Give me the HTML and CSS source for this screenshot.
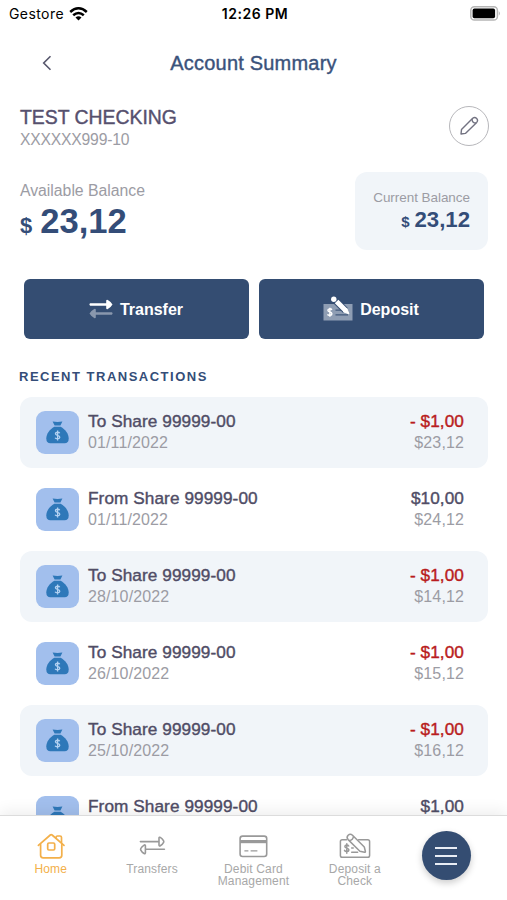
FILE: index.html
```html
<!DOCTYPE html>
<html lang="en">
<head>
<meta charset="utf-8">
<title>Account Summary</title>
<link rel="stylesheet" href="styles.css">
</head>
<body>
<svg class="defs" aria-hidden="true">
  <symbol id="bag" viewBox="0 0 23 23">
    <path d="M6.6 .6 Q11.5 1.4 16.4 .6 L14.4 4.6 H8.6 Z" fill="#2e78b9"/>
    <path d="M8.3 5.8 H14.7 C19 8.2 22.7 12.5 22.7 17.6 Q22.7 22.3 18.6 22.3 H4.4 Q.3 22.3 .3 17.6 C.3 12.5 4 8.2 8.3 5.8Z" fill="#2e78b9"/>
    <path d="M13.7 12.2 C13 10.8 9.3 10.9 9.4 12.8 C9.5 14.8 13.7 14 13.8 16.3 C13.7 18.3 9.8 18.2 9.1 16.7 M11.6 9.6 V19.5" fill="none" stroke="#b4d2f2" stroke-width="1.3"/>
  </symbol>
</svg>
<div class="app">
  <div class="status">
    <div class="carrier"><span>Gestore</span>
      <svg width="19" height="14" viewBox="0 0 19 14"><g fill="none" stroke="#000" stroke-width="2.5"><path d="M1.2 5 Q9.5 -2.4 17.8 5"/><path d="M4.2 8.3 Q9.5 3.6 14.8 8.3"/></g><path d="M6.5 10.5 Q9.5 8 12.5 10.5 L9.5 13.6Z"/></svg>
    </div>
    <div class="clock">12:26 PM</div>
    <svg class="battery" width="31" height="15" viewBox="0 0 31 15"><rect x=".8" y=".8" width="26.6" height="13.2" rx="3.6" fill="#fff" stroke="#b5b5b5" stroke-width="1.5"/><rect x="2.6" y="2.6" width="22.5" height="9.6" rx="1.8"/><path d="M28.8 5 Q30.8 7.4 28.8 9.8Z" fill="#aaa"/></svg>
  </div>
  <header class="header">
    <svg class="back" width="10" height="16" viewBox="0 0 10 16"><path d="M8.5 1.2 L1.7 8 L8.5 14.8" fill="none" stroke="#55556b" stroke-width="1.6"/></svg>
    <h1>Account Summary</h1>
  </header>
  <main class="content">
    <section class="account">
      <div><h2>TEST CHECKING</h2><p>XXXXXX999-10</p></div>
      <div class="edit"><svg width="20" height="20" viewBox="0 0 20 20"><g fill="none" stroke="#737382" stroke-width="1.4" stroke-linejoin="round"><path d="M2 18 L2.5 13.6 L13.7 2.3 Q15.8 .6 17.7 2.5 Q19.4 4.3 17.7 6.4 L6.4 17.4Z"/><path d="M13.1 3 Q12.8 6.8 17.1 7"/></g></svg></div>
    </section>
    <section class="balances">
      <div class="available"><div class="label">Available Balance</div><div class="amount"><small>$</small><b>23,12</b></div></div>
      <div class="current"><div class="label">Current Balance</div><div class="amount"><small>$</small><b>23,12</b></div></div>
    </section>
    <section class="actions">
      <div class="button"><svg width="24" height="20" viewBox="0 0 24 20"><g fill="#fff"><path d="M1.2 4.3 H17.2 V1.6 Q17.6 .4 18.8 1 Q22 2.8 23.5 5.5 Q22 8.2 18.8 10 Q17.6 10.6 17.2 9.4 V6.7 H1.2 Q-.4 5.5 1.2 4.3Z"/><path opacity=".42" d="M22.8 13.3 H6.8 V10.6 Q6.4 9.4 5.2 10 Q2 11.8 .5 14.5 Q2 17.2 5.2 19 Q6.4 19.6 6.8 18.4 V15.7 H22.8 Q24.4 14.5 22.8 13.3Z"/></g></svg><span>Transfer</span></div>
      <div class="button deposit"><svg width="30" height="26" viewBox="0 0 30 26"><rect x=".5" y="8" width="29" height="16.5" fill="#8e9db3"/><path d="M8.9 13.8 C8 12.3 4.7 12.5 4.9 14.4 C5.1 16.4 8.8 15.5 8.9 17.7 C9 19.8 5.3 19.8 4.5 18.3 M6.9 11.7 V20.8" fill="none" stroke="#fff" stroke-width="1.4"/><path d="M12.5 14.2 H18 M12.5 18.8 H25" stroke="#42597c" stroke-width="1.3"/><path d="M12.5 4.5 L22.6 14.6" stroke="#344d72" stroke-width="7"/><path d="M13.6 5.6 L22.6 14.6" stroke="#fff" stroke-width="5"/><circle cx="10.8" cy="3.2" r="2.7" fill="#fff"/><path d="M20.3 15.8 L23.8 12.3 L25.9 17.8Z" fill="#fff" stroke="#fff" stroke-linejoin="round"/></svg><span>Deposit</span></div>
    </section>
    <h3>RECENT TRANSACTIONS</h3>
    <section class="list">
      <div class="row shaded"><div class="icon"><svg width="23" height="23"><use href="#bag"/></svg></div><div class="desc"><strong>To Share 99999-00</strong><span>01/11/2022</span></div><div class="sum"><strong class="debit">- $1,00</strong><span>$23,12</span></div></div>
      <div class="row"><div class="icon"><svg width="23" height="23"><use href="#bag"/></svg></div><div class="desc"><strong>From Share 99999-00</strong><span>01/11/2022</span></div><div class="sum"><strong>$10,00</strong><span>$24,12</span></div></div>
      <div class="row shaded"><div class="icon"><svg width="23" height="23"><use href="#bag"/></svg></div><div class="desc"><strong>To Share 99999-00</strong><span>28/10/2022</span></div><div class="sum"><strong class="debit">- $1,00</strong><span>$14,12</span></div></div>
      <div class="row"><div class="icon"><svg width="23" height="23"><use href="#bag"/></svg></div><div class="desc"><strong>To Share 99999-00</strong><span>26/10/2022</span></div><div class="sum"><strong class="debit">- $1,00</strong><span>$15,12</span></div></div>
      <div class="row shaded"><div class="icon"><svg width="23" height="23"><use href="#bag"/></svg></div><div class="desc"><strong>To Share 99999-00</strong><span>25/10/2022</span></div><div class="sum"><strong class="debit">- $1,00</strong><span>$16,12</span></div></div>
      <div class="row"><div class="icon"><svg width="23" height="23"><use href="#bag"/></svg></div><div class="desc"><strong>From Share 99999-00</strong></div><div class="sum"><strong>$1,00</strong></div></div>
    </section>
  </main>
  <nav class="tabs">
    <div class="tab active"><svg width="30" height="28" viewBox="0 0 30 28"><g fill="none" stroke="#f3b04a" stroke-width="1.7" stroke-linejoin="round" stroke-linecap="round"><path d="M2.4 13.4 L14.3 3 Q15.2 2.2 16.1 3 L28 13.4"/><path d="M4.6 12.6 V23.2 Q4.6 25.8 7.2 25.8 H23.2 Q25.8 25.8 25.8 23.2 V12.6"/><path d="M20 5.8 Q20 4 21.5 4 H24 Q25.5 4 25.5 5.5 V10.6"/><rect x="11.7" y="11" width="7" height="7" rx="1.2"/></g></svg><span>Home</span></div>
    <div class="tab"><svg width="30" height="28" viewBox="0 0 30 28"><g fill="none" stroke="#999" stroke-width="1.6" stroke-linejoin="round" stroke-linecap="round"><path d="M3.4 9.6 H22 M22 6 Q22.2 4.8 23.3 5.4 Q25.6 6.8 26.6 8.8 Q27 9.6 26.6 10.4 Q25.6 12.4 23.3 13.8 Q22.2 14.4 22 13.2Z"/><path d="M27.4 17.3 H8.4 M8.4 13.7 Q8.2 12.5 7.1 13.1 Q4.8 14.5 3.8 16.5 Q3.4 17.3 3.8 18.1 Q4.8 20.1 7.1 21.5 Q8.2 22.1 8.4 20.9Z"/></g></svg><span>Transfers</span></div>
    <div class="tab"><svg width="30" height="28" viewBox="0 0 30 28"><rect x="2.1" y="4.1" width="26.6" height="20.4" rx="2.5" fill="none" stroke="#999" stroke-width="1.6"/><path d="M2 9.6 H28.8" stroke="#999" stroke-width="3.2"/><path d="M6.4 18.9 H10.4 M12.6 18.9 H19.4" stroke="#999" stroke-width="1.4"/></svg><span>Debit Card<br>Management</span></div>
    <div class="tab"><svg width="32" height="28" viewBox="0 0 32 28"><g fill="none" stroke="#999" stroke-width="1.5" stroke-linejoin="round" stroke-linecap="round"><path d="M7.5 7.8 H3.2 Q1.4 7.8 1.4 9.6 V23.4 Q1.4 25.2 3.2 25.2 H28.8 Q30.6 25.2 30.6 23.4 V9.6 Q30.6 7.8 28.8 7.8 H19.6"/><path d="M9.1 3.2 Q11.3 1.2 13.5 3.2 L25.3 15 L26.4 19.5 Q26.4 20.4 25.5 20.3 L20.9 19.3 L9.1 7.6 Q7.1 5.4 9.1 3.2Z M10.3 8.6 Q14.2 8.3 14.4 4.3"/><path d="M9.7 14 C8.8 12.4 5.8 12.7 5.9 14.6 C6.1 16.7 9.8 15.5 9.9 17.9 C9.9 20 6.2 19.9 5.5 18.4 M7.8 11.7 V21.2"/><path d="M12.7 16 H14.2 M12.7 20.2 H18.6"/></g></svg><span>Deposit a<br>Check</span></div>
    <div class="tab menu-tab"><div class="menu"><i></i><i></i><i></i></div></div>
  </nav>
</div>
</body>
</html>
```

FILE: styles.css
```css
* { box-sizing: border-box; }
body { margin: 0; background: #fff; font-family: "Liberation Sans", Arial, sans-serif; }
h1, h2, h3, p { margin: 0; font-weight: 400; }
svg { display: block; flex: none; }
.defs { position: absolute; width: 0; height: 0; }
.app { display: flex; flex-direction: column; width: 507px; height: 900px; overflow: hidden; }

.status { display: grid; grid-template-columns: 1fr auto 1fr; align-items: center; height: 27px; padding: 0 6px 0 9px; font-family: Inter, sans-serif; flex: none; }
.carrier { display: flex; align-items: center; gap: 5px; font-size: 14px; letter-spacing: .42px; }
.clock { font-size: 14px; font-weight: 600; letter-spacing: .5px; }
.battery { justify-self: end; }

.header { display: grid; grid-template-columns: 1fr auto 1fr; align-items: center; height: 71px; padding: 1px 42px 0; flex: none; }
.header h1 { font-size: 20px; line-height: 24px; letter-spacing: .2px; color: #3a527b; -webkit-text-stroke: .4px #3a527b; }

.content { flex: 1; min-height: 0; overflow: hidden; padding: 0 19px 0 20px; }
.account { display: flex; justify-content: space-between; height: 74px; padding-top: 7px; }
.account h2 { font-size: 19.4px; line-height: 24px; color: #56506e; -webkit-text-stroke: .4px #56506e; }
.account p { font-size: 15.7px; line-height: 22px; letter-spacing: -.2px; color: #9c9ca4; }
.edit { display: flex; align-items: center; justify-content: center; width: 40px; height: 40px; margin: 1px -1px 0 0; border: 1.5px solid #b7b7bb; border-radius: 50%; }

.balances { display: flex; justify-content: space-between; height: 107px; }
.label { color: #9c9ca4; }
.available { padding-top: 10px; }
.available .label { font-size: 15.8px; line-height: 18px; letter-spacing: -.02px; }
.amount { color: #344d78; font-weight: 700; }
.available .amount { display: flex; align-items: baseline; gap: 8px; margin-top: 1px; font-size: 34.6px; line-height: 40px; }
.available small { font-size: 22px; }
.current { width: 133px; height: 78px; padding: 17px 18px 0 0; border-radius: 12px; background: #f1f5f9; text-align: right; }
.current .label { font-size: 13.5px; line-height: 17px; letter-spacing: -.05px; }
.current .amount { display: flex; align-items: baseline; justify-content: flex-end; gap: 5px; font-size: 22.2px; line-height: 26px; margin-top: 1px; }
.current small { font-size: 15px; }

.actions { display: flex; gap: 10px; padding: 0 4px; }
.button { display: flex; flex: 1; align-items: center; justify-content: center; gap: 7px; height: 60px; padding-right: 1px; border-radius: 6px; background: #344d72; color: #fff; font-size: 16px; font-weight: 700; }
.button span { padding-top: 1px; }

.content h3 { margin: 30px 0 0 -1px; font-size: 13px; font-weight: 700; line-height: 16px; letter-spacing: 1.5px; color: #344d78; }
.list { display: flex; flex-direction: column; gap: 6px; margin-top: 12px; }
.row { display: flex; flex: none; height: 71px; padding: 14px 24px 0 16px; border-radius: 12px; }
.shaded { background: #f1f5f9; }
.icon { display: flex; align-items: center; justify-content: center; width: 43px; height: 43px; border-radius: 9px; background: #a2bfed; flex: none; }
.desc, .sum { display: flex; flex-direction: column; }
.desc { flex: 1; margin-left: 9px; }
.sum { align-items: flex-end; }
.row strong { font-size: 17.2px; font-weight: 400; line-height: 21px; letter-spacing: .08px; color: #504d66; -webkit-text-stroke: .4px currentColor; }
.row strong.debit { color: #b91c20; }
.row span { font-size: 16px; line-height: 21px; letter-spacing: .12px; color: #9c9ca4; }

.tabs { display: flex; flex: none; height: 85px; padding-top: 16px; border-top: 1px solid #dcdcdc; background: #fff; box-shadow: 0 -4px 14px rgba(0, 0, 0, .07); position: relative; }
.tab { display: flex; flex-direction: column; align-items: center; width: 101.4px; text-align: center; font-size: 12px; line-height: 12px; color: #a8a8a8; }
.tab span { margin-top: 3px; letter-spacing: .15px; }
.active { color: #f3b04a; }
.menu { display: flex; flex-direction: column; align-items: center; justify-content: center; gap: 6px; width: 49px; height: 49px; margin-top: -1px; margin-left: -20px; border-radius: 50%; background: #344d72; box-shadow: 0 3px 7px rgba(0, 0, 0, .2); }
.menu i { width: 22px; height: 2px; background: #e8edf5; }
```
